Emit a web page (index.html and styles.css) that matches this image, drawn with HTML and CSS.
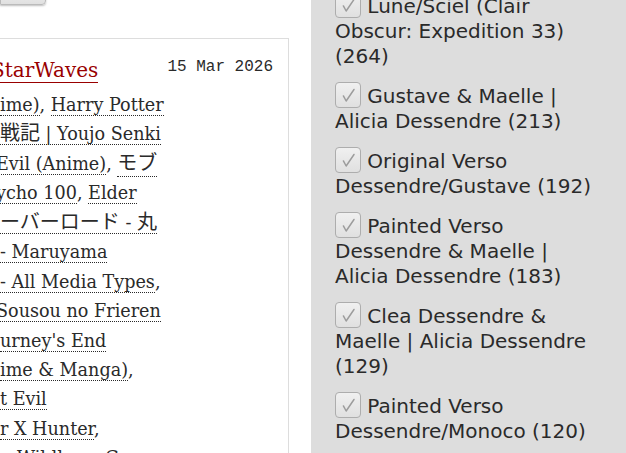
FILE: index.html
```html
<!DOCTYPE html>
<html lang="en">
<head>
    <meta charset="UTF-8">
    <meta name="viewport" content="width=device-width, initial-scale=1.0">
    <title>Works - Filters</title>
    <link rel="stylesheet" href="styles.css">
</head>
<body>
    <div class="page">
        <div class="main">
            <div class="actions">
                <button class="action-btn">Sort</button>
            </div>

            <div class="blurb">
                <div class="blurb-header">
                    <h4 class="heading"><a href="#">StarWaves</a></h4>
                    <p class="datetime">15 Mar 2026</p>
                </div>
                <div class="fandoms">
                    <div class="line"><a class="tag" href="#">ime)</a>, <a class="tag" href="#">Harry Potter</a></div>
                    <div class="line"><a class="tag" href="#"><span class="jp">戦記</span> | Youjo Senki</a></div>
                    <div class="line cut"><a class="tag" href="#">Evil (Anime)</a>, <a class="tag jp" href="#">モブ</a></div>
                    <div class="line cut"><a class="tag" href="#">ycho 100</a>, <a class="tag" href="#">Elder</a></div>
                    <div class="line"><a class="tag" href="#"><span class="jp">ーバーロード</span> - <span class="jp">丸</span></a></div>
                    <div class="line"><a class="tag" href="#">- Maruyama</a></div>
                    <div class="line"><a class="tag" href="#">- All Media Types</a>,</div>
                    <div class="line cut"><a class="tag" href="#">Sousou no Frieren</a></div>
                    <div class="line"><a class="tag" href="#">urney's End</a></div>
                    <div class="line"><a class="tag" href="#">ime &amp; Manga)</a>,</div>
                    <div class="line"><a class="tag" href="#">t Evil</a></div>
                    <div class="line"><a class="tag" href="#">r X Hunter</a>,</div>
                    <div class="line"><a class="tag" href="#">n Wildhaus Gaze</a></div>
                </div>
            </div>
        </div>

        <div class="filters">
            <ul class="filter-list">
                <li><label><span class="checkbox"><svg viewBox="0 0 26 26"><polyline points="8,14 11,19.5 19.5,7"/></svg></span> Lune/Sciel (Clair<br>Obscur: Expedition 33)<br>(264)</label></li>
                <li><label><span class="checkbox"><svg viewBox="0 0 26 26"><polyline points="8,14 11,19.5 19.5,7"/></svg></span> Gustave &amp; Maelle |<br>Alicia Dessendre (213)</label></li>
                <li><label><span class="checkbox"><svg viewBox="0 0 26 26"><polyline points="8,14 11,19.5 19.5,7"/></svg></span> Original Verso<br>Dessendre/Gustave (192)</label></li>
                <li><label><span class="checkbox"><svg viewBox="0 0 26 26"><polyline points="8,14 11,19.5 19.5,7"/></svg></span> Painted Verso<br>Dessendre &amp; Maelle |<br>Alicia Dessendre (183)</label></li>
                <li><label><span class="checkbox"><svg viewBox="0 0 26 26"><polyline points="8,14 11,19.5 19.5,7"/></svg></span> Clea Dessendre &amp;<br>Maelle | Alicia Dessendre<br>(129)</label></li>
                <li><label><span class="checkbox"><svg viewBox="0 0 26 26"><polyline points="8,14 11,19.5 19.5,7"/></svg></span> Painted Verso<br>Dessendre/Monoco (120)</label></li>
            </ul>
        </div>
    </div>
</body>
</html>
```

FILE: styles.css
```css
* {
    margin: 0;
    padding: 0;
    box-sizing: border-box;
}

body {
    background: #fff;
    color: #2a2a2a;
    width: 626px;
    height: 453px;
    overflow: hidden;
}

.page {
    display: flex;
    height: 453px;
}

.main {
    flex: 0 0 311px;
    overflow: hidden;
}

/* only the bottom edge of the button shows */
.actions {
    display: flex;
    align-items: flex-end;
    height: 5px;
}

.action-btn {
    flex: 0 0 46px;
    height: 30px;
    border: 1px solid #bbb;
    border-radius: 0 0 4px 0;
    background: linear-gradient(#fff, #e0e0e0);
    box-shadow: 0 1px 2px rgba(0, 0, 0, 0.25);
    font-size: 12px;
}

.blurb {
    margin: 33px 22px 0 -1px;
    border: 1px solid #ddd;
    border-bottom: none;
    padding: 18px 15px 0 0;
}

.blurb-header {
    display: flex;
    justify-content: space-between;
    align-items: flex-start;
}

.heading {
    font-family: "DejaVu Serif", serif;
    font-weight: normal;
    font-size: 20px;
    line-height: 26px;
    margin-left: -9px;
}

.heading a {
    color: #990000;
    text-decoration: none;
    border-bottom: 1px solid #990000;
}

.datetime {
    font-family: "Liberation Mono", monospace;
    font-size: 16px;
    line-height: 20px;
}

.fandoms {
    margin-top: 8px;
    font-family: "DejaVu Serif", "Noto Sans CJK JP", serif;
    font-size: 17.6px;
    line-height: 29.4px;
    white-space: nowrap;
}

.line {
    height: 29.45px;
}

.jp {
    font-family: "Noto Sans CJK JP", sans-serif;
    font-size: 20px;
    line-height: 20px;
}

.line.cut {
    margin-left: -4px;
}

.tag {
    color: #2a2a2a;
    text-decoration: none;
    border-bottom: 1px dotted #2a2a2a;
}

.filters {
    flex: 1;
    background: #dddddd;
    padding-left: 24px;
    overflow: hidden;
}

.filter-list {
    list-style: none;
    margin-top: -6px;
    font-family: "DejaVu Sans", sans-serif;
    font-size: 20px;
    line-height: 25px;
    white-space: nowrap;
}

.filter-list li {
    margin-bottom: 15px;
}

.checkbox {
    display: inline-block;
    width: 26px;
    height: 26px;
    margin-top: -2px;
    vertical-align: -5px;
    border: 1px solid #adadad;
    border-radius: 4px;
    background: linear-gradient(#f0f0f0, #e0e0e0);
}

.checkbox svg {
    display: block;
    width: 24px;
    height: 24px;
    fill: none;
    stroke: #9c9c9c;
    stroke-width: 1.6;
    stroke-linecap: round;
    stroke-linejoin: round;
}
```
